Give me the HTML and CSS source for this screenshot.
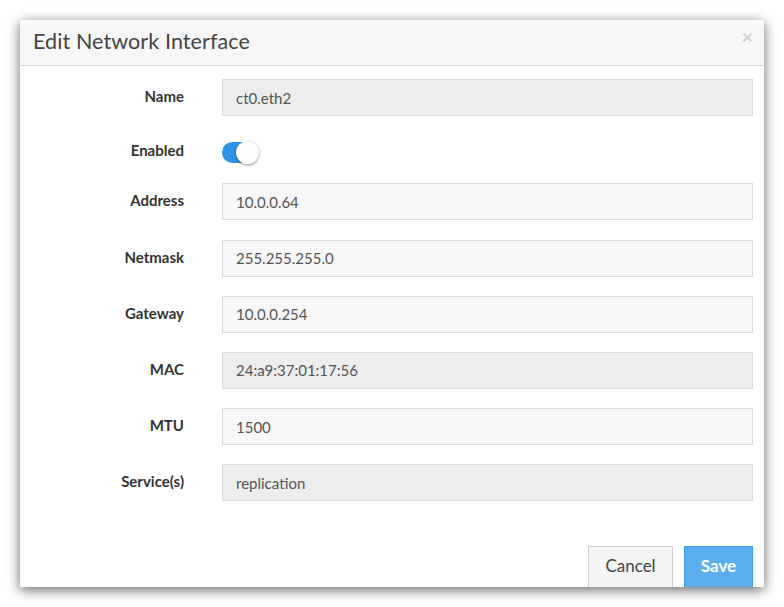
FILE: index.html
```html
<!DOCTYPE html>
<html>
<head>
<meta charset="utf-8">
<link rel="stylesheet" href="styles.css">
</head>
<body>
<div class="modal">
  <div class="modal-header">
    <h4 class="title">Edit Network Interface</h4>
    <span class="close">&times;</span>
  </div>
  <div class="modal-body">
    <div class="form">
      <label class="label">Name</label>
      <div class="input disabled">ct0.eth2</div>
      <label class="label toggle-label">Enabled</label>
      <div class="toggle-cell"><span class="toggle"><span class="knob"></span></span></div>
      <label class="label">Address</label>
      <div class="input">10.0.0.64</div>
      <label class="label">Netmask</label>
      <div class="input">255.255.255.0</div>
      <label class="label">Gateway</label>
      <div class="input">10.0.0.254</div>
      <label class="label">MAC</label>
      <div class="input disabled">24:a9:37:01:17:56</div>
      <label class="label">MTU</label>
      <div class="input">1500</div>
      <label class="label">Service(s)</label>
      <div class="input disabled">replication</div>
    </div>
  </div>
  <div class="modal-footer">
    <button class="btn btn-cancel">Cancel</button>
    <button class="btn btn-save">Save</button>
  </div>
</div>
</body>
</html>
```
FILE: styles.css
```css
html, body {
  margin: 0;
  padding: 0;
  background: #ffffff;
}
body {
  padding: 20px;
  font-family: Lato, "Liberation Sans", sans-serif;
}
.modal {
  width: 744px;
  height: 567px;
  background: #ffffff;
  box-shadow: 0 3px 12px rgba(0, 0, 0, 0.6);
  overflow: hidden;
  display: flex;
  flex-direction: column;
}
.modal-header {
  height: 45px;
  background: #f7f7f7;
  border-bottom: 1px solid #d4d4d4;
  display: flex;
  align-items: center;
  justify-content: space-between;
  padding: 0 11px 0 13px;
  flex-shrink: 0;
}
.title {
  margin: 0 0 3px 0;
  font-size: 21.5px;
  font-weight: 400;
  color: #444444;
  letter-spacing: 0.1px;
}
.close {
  font-size: 20px;
  line-height: 1;
  color: #c8c8c8;
  margin-top: -14px;
}
.modal-body {
  padding: 13px 11px 0 20px;
}
.form {
  display: grid;
  grid-template-columns: 144px 1fr;
  column-gap: 38px;
  row-gap: 19.2px;
  align-items: center;
}
.label {
  text-align: right;
  font-weight: 700;
  font-size: 15px;
  color: #333333;
  margin-bottom: 3px;
}
.input {
  height: 35px;
  border: 1px solid #d9d9d9;
  background: #f7f7f7;
  padding: 0 13px;
  display: flex;
  align-items: center;
  font-size: 15px;
  color: #555555;
}
.input.disabled {
  background: #ededed;
}
.toggle-cell {
  height: 29px;
  display: flex;
  align-items: center;
  padding-top: 5px;
  box-sizing: border-box;
}
.toggle-label {
  padding-top: 3px;
}
.toggle {
  position: relative;
  display: block;
  width: 36px;
  height: 21px;
  border-radius: 11px;
  background: #2e92e6;
}
.knob {
  position: absolute;
  right: -1px;
  top: -1px;
  width: 23px;
  height: 23px;
  border-radius: 50%;
  background: #fdfdfd;
  box-shadow: 0 1px 3px rgba(0, 0, 0, 0.45);
}
.modal-footer {
  margin-top: auto;
  display: flex;
  justify-content: flex-end;
  gap: 11px;
  padding: 0 11px 0 0;
  height: 41px;
  align-items: flex-start;
}
.btn {
  font-family: Lato, "Liberation Sans", sans-serif;
  font-size: 17px;
  height: 44px;
  padding: 0 0 5px 0;
  border-radius: 0;
  cursor: pointer;
}
.btn-cancel {
  background: #f5f5f5;
  border: 1px solid #cccccc;
  color: #444444;
  width: 85px;
}
.btn-save {
  background: #5aaeec;
  border: 1px solid #3d9be4;
  color: #ffffff;
  font-weight: 700;
  width: 69px;
}
```
